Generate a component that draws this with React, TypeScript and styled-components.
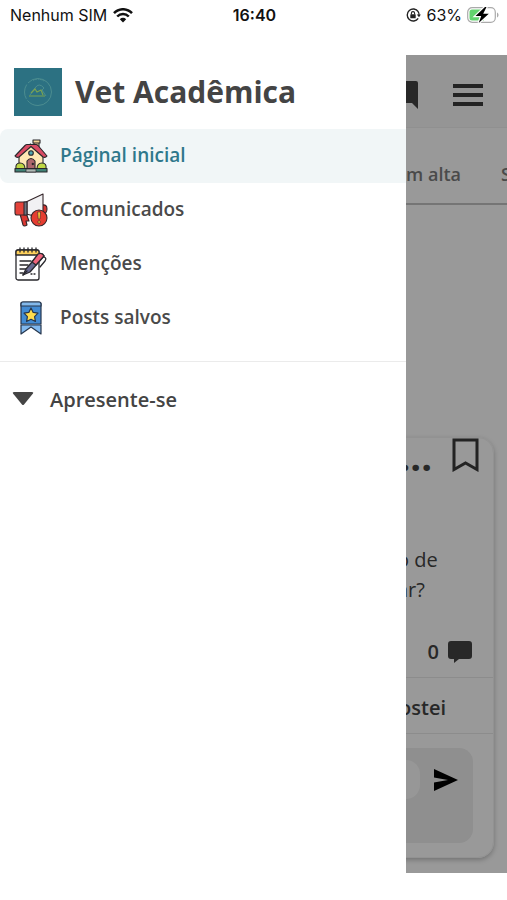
import React from "react";
import styled, { createGlobalStyle } from "styled-components";

const GlobalStyle = createGlobalStyle`
  * { box-sizing: border-box; }
  body { margin: 0; background: #fff; color: #444; font-family: "Open Sans", "Noto Sans", sans-serif; }
  button { font: inherit; color: inherit; background: none; border: 0; padding: 0; }
  svg { display: block; flex: none; }
`;

const Screen = styled.div`
  display: flex;
  flex-direction: column;
  min-height: 100vh;
  padding-bottom: 27px;
  overflow: hidden;
`;

const StatusBar = styled.header`
  display: grid;
  grid-template-columns: 1fr auto 1fr;
  height: 30px;
  margin-bottom: 25px;
  padding: 0 8px 0 10px;
  align-items: center;
  color: #111;
  font: 16px/20px Inter, sans-serif;
`;

const StatusGroup = styled.div<{ $end?: boolean }>`
  display: flex;
  align-items: center;
  gap: ${(p) => (p.$end ? 5 : 6)}px;
  justify-content: ${(p) => (p.$end ? "flex-end" : "flex-start")};
`;

const Clock = styled.time`
  font-weight: 600;
`;

const Stage = styled.div`
  flex: 1;
  display: grid;
  grid-template: 1fr / minmax(0, 1fr);
  > * { grid-area: 1 / 1; }
`;

const Scrim = styled.div`
  background: rgba(0, 0, 0, 0.4);
`;

const Drawer = styled.aside`
  width: 80%;
  background: #fff;
  z-index: 1;
`;

const Brand = styled.div`
  display: flex;
  align-items: center;
  gap: 13px;
  height: 74px;
  padding-left: 14px;
`;

const BrandName = styled.h1`
  margin: 0;
  font-size: 30px;
  line-height: 40px;
  font-weight: 700;
`;

const Menu = styled.nav`
  display: flex;
  flex-direction: column;
  padding-bottom: 16px;
  border-bottom: 1px solid #ebebeb;
`;

const MenuLink = styled.a<{ $active?: boolean }>`
  display: flex;
  align-items: center;
  gap: 12px;
  height: 54px;
  padding: 0 0 2px 14px;
  border-radius: 8px 0 0 8px;
  background: ${(p) => (p.$active ? "#f1f6f7" : "transparent")};
  color: ${(p) => (p.$active ? "#2f788b" : "#4a4a4a")};
  font-size: 19px;
  line-height: 24px;
  font-weight: 600;
  text-decoration: none;

  svg { margin-top: 2px; }
`;

const GroupToggle = styled.button`
  display: flex;
  align-items: center;
  gap: 16px;
  width: 100%;
  height: 74px;
  padding-left: 12px;
  font-size: 20px;
  font-weight: 600;
`;

const Feed = styled.main`
  display: flex;
  flex-direction: column;
  min-width: 0;
  overflow: hidden;
`;

const TopBar = styled.div`
  display: flex;
  justify-content: flex-end;
  align-items: center;
  gap: 34px;
  height: 73px;
  padding: 8px 23px 0 0;
  background: #f9f9f9;
  border-bottom: 1px solid #f0f0f0;
`;

const Tabs = styled.div`
  display: flex;
  justify-content: flex-end;
  align-items: center;
  gap: 40px;
  height: 77px;
  padding-top: 16px;
  border-bottom: 2px solid #c4c4c4;
  color: #7c7c7c;
  font-size: 18px;
  font-weight: 600;
`;

const Tab = styled.button<{ $cut?: boolean }>`
  flex: none;
  width: ${(p) => (p.$cut ? "6px" : "auto")};
  text-align: left;
  overflow: hidden;
`;

const Card = styled.article`
  margin: auto 13px 15px;
  border-radius: 16px;
  border: 1px solid #f4f4f4;
  box-shadow: 0 2px 5px rgba(0, 0, 0, 0.25);
`;

const CardTop = styled.div`
  display: flex;
  justify-content: flex-end;
  align-items: flex-start;
  gap: 20px;
  padding-right: 13px;
`;

const Title = styled.h2`
  margin: 0;
  font-size: 38px;
  line-height: 36px;
  font-weight: 700;
`;

const Question = styled.p`
  width: 40px;
  margin: 71px 56px 28px auto;
  font-size: 20px;
  line-height: 30px;
  white-space: nowrap;
`;

const Stats = styled.div`
  display: flex;
  justify-content: flex-end;
  align-items: center;
  gap: 9px;
  height: 38px;
  padding-right: 21px;
  font-size: 20px;
  line-height: 30px;
  font-weight: 600;
  margin-bottom: 6px;
`;

const Reactions = styled.div`
  display: flex;
  justify-content: flex-end;
  align-items: center;
  height: 57px;
  padding: 3px 47px 0 0;
  border: solid #eaeaea;
  border-width: 1px 0;
  font-size: 20px;
  font-weight: 600;
`;

const Reply = styled.form`
  display: flex;
  align-items: flex-start;
  gap: 14px;
  height: 95px;
  margin: 14px 20px;
  padding: 12px 15px 0;
  border-radius: 14px;
  background: #eee;
`;

const ReplyInput = styled.input`
  flex: 1;
  min-width: 0;
  height: 39px;
  border: 0;
  border-radius: 14px;
  background: #fcfcfc;
`;

const SendButton = styled.button`
  height: 39px;
`;

const Wifi = () => (
  <svg width="20" height="15" viewBox="0 0 20 15" fill="none" stroke="#111" strokeWidth="2.5">
    <path d="M1 5.2C6-.1 14-.1 19 5.2M4.2 8.5c3.3-3.4 8.3-3.4 11.6 0" />
    <path d="M6.8 11.2c1.8-1.8 4.6-1.8 6.4 0L10 14.5z" fill="#111" stroke="none" />
  </svg>
);

const RotationLock = () => (
  <svg width="15" height="14" viewBox="0 0 15 14" fill="none" stroke="#222">
    <path d="M12.2 3.6A6 6 0 1 0 12.2 10.4" strokeWidth="1.4" />
    <path d="M12 3.5q1.3 1.5 1 4" strokeWidth="1.2" />
    <path d="M10.8 6.5h4L13 9.2z" fill="#222" stroke="none" />
    <rect x="4.3" y="6.3" width="5.4" height="4" rx=".6" fill="#222" stroke="none" />
    <path d="M5.4 6.5V5.2a1.6 1.6 0 0 1 3.2 0v1.3" strokeWidth="1.1" />
  </svg>
);

const Battery = () => (
  <svg width="32" height="16" viewBox="0 0 32 16">
    <rect x=".7" y=".7" width="27.6" height="14.6" rx="4.5" fill="#fff" stroke="#aaa" strokeWidth="1.2" />
    <path d="M5 2.5h12v11H5a2.5 2.5 0 0 1-2.5-2.5V5A2.5 2.5 0 0 1 5 2.5z" fill="#62d36e" />
    <path d="M30 5.5c2 .7 2 4.3 0 5z" fill="#aaa" />
    <path d="M18 0 8.5 9h5.7l-2.5 7L21.8 6.7h-5.6L19.5 0z" fill="#000" stroke="#fff" strokeWidth="2.4" paintOrder="stroke" />
  </svg>
);

const Logo = () => (
  <svg width="48" height="48" viewBox="0 0 48 48">
    <path d="M0 0h48v48H0z" fill="#2c7182" />
    <g fill="none" stroke="#4f9091" strokeWidth=".9">
      <circle cx="24" cy="24" r="13.5" strokeDasharray="33 2 15 2" />
      <path d="M19 12.5q5-3 11 .5" strokeDasharray="1.5 1" />
      <path d="m16 27 5-7q4-6 9 0l-2 2 4 6" />
    </g>
    <path d="M15 28h16M17 25l4-4 2 3 4-2 2 5" fill="none" stroke="#7ba352" strokeWidth="1.2" />
  </svg>
);

const HomeIcon = () => (
  <svg width="34" height="34" viewBox="0 0 34 34" stroke="#28272b" strokeWidth="1.1" strokeLinejoin="round">
    <path d="M20 9V2h5v10z" fill="#f4d596" />
    <path d="M19 1h7v3h-7z" fill="#f4d596" />
    <path d="M5 15 16.5 5 29 15v16H5z" fill="#ffe7b4" />
    <path d="M1 17 11 6.5q1-1 2-1h9q1 0 2 1L33 17q-1.5 2-4 1L17 7.5 5 18q-2.5 1-4-1z" fill="#d94b64" />
    <circle cx="17" cy="14" r="2.3" fill="#4fa6b0" />
    <path d="M13 30v-8q4-5 8 0v8z" fill="#ad666c" />
    <path d="M2 30q-1-6 4-6t5 6zM23 30q0-6 5-6t4 6z" fill="#bed744" />
    <path d="M1 29.5h32V33H1z" fill="#3f8175" />
    <path d="M12 30h10v3H12z" fill="#aeb9b4" strokeWidth=".7" />
    <circle cx="18.8" cy="25" r=".6" />
  </svg>
);

const MegaphoneIcon = () => (
  <svg width="34" height="34" viewBox="0 0 34 34" stroke="#35262a" strokeWidth="1.1" strokeLinejoin="round">
    <path d="m6 21 3 11q1 2 4 0l-1-4h3l-3-8z" fill="#dc3832" />
    <path d="M28 12q5-1 5 4t-5 5z" fill="#d83731" />
    <path d="M12 9 29 1v24l-17-4z" fill="#f1f1f3" />
    <path d="M3 9h10v13H3q-2 0-2-2v-9q0-2 2-2z" fill="#e4433a" />
    <path d="M10 9h3v13h-3z" fill="#6c7480" />
    <circle cx="25" cy="25" r="8" fill="#e53d31" />
    <path d="M23.6 19h3l-.6 7h-1.8z" fill="#ffc739" strokeWidth=".6" />
    <circle cx="25.1" cy="29" r="1.3" fill="#ffc739" strokeWidth=".6" />
  </svg>
);

const NotesIcon = () => (
  <svg width="34" height="34" viewBox="0 0 34 34" stroke="#29282d" strokeWidth="1.3" strokeLinecap="round" strokeLinejoin="round">
    <rect x="2" y="3" width="23" height="30" rx="2" fill="#fff" />
    <path d="M2 8V5q0-2 2-2h19q2 0 2 2v3z" fill="#ffd15b" />
    <path d="M6 1v4M10 1v4M14 1v4M18 1v4M22 1v4M6 14h11M6 18h8M6 22h6M6 26h3M17 27h1M20 27h1" fill="none" />
    <path d="m12 22 12-14q4-3 6 1L16 25l-7 3z" fill="#696b91" />
    <path d="m18 15 6-8q4-2 6 2l-8 9z" fill="#f0657c" />
    <path d="M30 10q3 1 1 4l-5 6M9 28l4-4" fill="none" />
  </svg>
);

const RibbonIcon = () => (
  <svg width="34" height="34" viewBox="0 0 34 34" stroke="#26364d" strokeWidth="1.2" strokeLinejoin="round">
    <path d="M7 24h20v9l-10-7-10 7z" fill="#80b8ee" />
    <path d="M9 1h16q2 0 2 2v20H7V3q0-2 2-2z" fill="#428bd3" />
    <path d="M9 1h16q2 0 2 2v2H7V3q0-2 2-2z" fill="#83b9eb" />
    <path d="m17 7 2.2 4.4 4.8.8-3.4 3.5.8 4.8-4.4-2.2-4.4 2.2.8-4.8-3.4-3.5 4.8-.8z" fill="#ffdc4e" />
  </svg>
);

const menuItems = [
  { label: "Páginal inicial", Icon: HomeIcon, active: true },
  { label: "Comunicados", Icon: MegaphoneIcon },
  { label: "Menções", Icon: NotesIcon },
  { label: "Posts salvos", Icon: RibbonIcon },
];

export default function App() {
  return (
    <>
      <GlobalStyle />
      <Screen>
        <StatusBar>
          <StatusGroup><span>Nenhum SIM</span><Wifi /></StatusGroup>
          <Clock>16:40</Clock>
          <StatusGroup $end><RotationLock /><span>63%</span><Battery /></StatusGroup>
        </StatusBar>
        <Stage>
          <Feed>
            <TopBar>
              <button aria-label="Mensagens">
                <svg width="28" height="28" viewBox="0 0 28 28" fill="#444"><path d="M2 0h24q2 0 2 2v26l-6-6H2q-2 0-2-2V2q0-2 2-2z" /></svg>
              </button>
              <button aria-label="Menu">
                <svg width="32" height="22" viewBox="0 0 32 22" fill="#3b3b3b"><path d="M1 0h30v4H1zM1 9h30v4H1zM1 18h30v4H1z" /></svg>
              </button>
            </TopBar>
            <Tabs><Tab>Em alta</Tab><Tab $cut>S</Tab></Tabs>
            <Card>
              <CardTop>
                <Title>...</Title>
                <button aria-label="Salvar post">
                  <svg width="28" height="34" viewBox="0 0 28 34" fill="none" stroke="#3b3b3b" strokeWidth="3"><path d="M2 2h23v29.5L13.5 25 2 31.5z" /></svg>
                </button>
              </CardTop>
              <Question>o de<br />ar?</Question>
              <Stats>
                <span>0</span>
                <svg width="24" height="22" viewBox="0 0 24 22" fill="#444"><path d="M3 0h18q3 0 3 3v12q0 3-3 3H11l-5 4v-4H3q-3 0-3-3V3q0-3 3-3z" /></svg>
              </Stats>
              <Reactions><button>Gostei</button></Reactions>
              <Reply onSubmit={(e: React.FormEvent) => e.preventDefault()}>
                <ReplyInput aria-label="Comentário" />
                <SendButton aria-label="Enviar">
                  <svg width="24" height="22" viewBox="0 0 24 22"><path d="M0 0 24 11 0 22v-8.5L14 11 0 8.5z" /></svg>
                </SendButton>
              </Reply>
            </Card>
          </Feed>
          <Scrim />
          <Drawer>
            <Brand><Logo /><BrandName>Vet Acadêmica</BrandName></Brand>
            <Menu>
              {menuItems.map(({ label, Icon, active }) => (
                <MenuLink key={label} href="#" $active={active}><Icon />{label}</MenuLink>
              ))}
            </Menu>
            <GroupToggle>
              <svg width="22" height="14" viewBox="0 0 22 14" fill="#444"><path d="M2 0h18q2 0 .8 1.7L12 12.5q-1 1-2 0L1.2 1.7Q0 0 2 0z" /></svg>
              Apresente-se
            </GroupToggle>
          </Drawer>
        </Stage>
      </Screen>
    </>
  );
}
